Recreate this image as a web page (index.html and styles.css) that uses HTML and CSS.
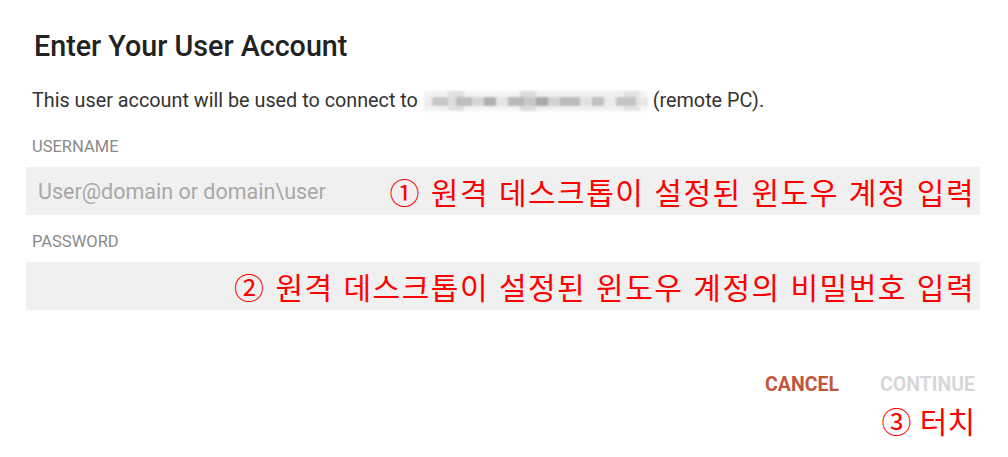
FILE: index.html
```html
<!DOCTYPE html>
<html lang="ko">

<head>
    <meta charset="utf-8">
    <title>Enter Your User Account</title>
    <link rel="stylesheet" href="styles.css">
</head>

<body>
    <main class="dialog">
        <h1 class="titel">Enter Your User Account</h1>
        <p class="info">This user account will be used to connect to <span class="sloret"></span> (remote PC).</p>

        <label class="etiket">USERNAME</label>
        <div class="felt">
            <span class="pladsholder">User@domain or domain\user</span>
            <span class="note">① 원격 데스크톱이 설정된 윈도우 계정 입력</span>
        </div>

        <label class="etiket">PASSWORD</label>
        <div class="felt">
            <span class="pladsholder"></span>
            <span class="note">② 원격 데스크톱이 설정된 윈도우 계정의 비밀번호 입력</span>
        </div>

        <div class="knapper">
            <button class="annuller">CANCEL</button>
            <button class="fortsaet">CONTINUE</button>
        </div>
        <div class="tryk"><span class="note">③ 터치</span></div>
    </main>
</body></html>
```

FILE: styles.css
```css
* {
    padding: 0;
    margin: 0;
    box-sizing: border-box;
}

body {
    background-color: white;
    font-family: Roboto, "Liberation Sans", sans-serif;
}

.dialog {
    padding: 28px 28px 0 26px;
}

.titel {
    font-size: 28.7px;
    font-weight: 500;
    color: #222;
    margin-left: 8px;
    line-height: 36px;
}

.info {
    font-size: 19.8px;
    color: #333;
    margin: 25px 0 0 6px;
    line-height: 24px;
}

/* utydeligt skjult pc-navn */
.sloret {
    display: inline-block;
    width: 224px;
    height: 20px;
    margin: 0 0 0 1px;
    vertical-align: -4px;
    filter: blur(1px);
    background:
        linear-gradient(90deg,
            #eee 0, #eee 8px, #c8c8c8 8px, #c8c8c8 24px, #ddd 24px, #ddd 32px,
            #bdbdbd 32px, #bdbdbd 48px, #d6d6d6 48px, #d6d6d6 60px, #b0b0b0 60px, #b0b0b0 72px,
            #e4e4e4 72px, #e4e4e4 84px, #b8b8b8 84px, #b8b8b8 100px, #c9c9c9 100px, #c9c9c9 112px,
            #a9a9a9 112px, #a9a9a9 124px, #d2d2d2 124px, #d2d2d2 136px, #bcbcbc 136px, #bcbcbc 156px,
            #e2e2e2 156px, #e2e2e2 168px, #c0c0c0 168px, #c0c0c0 180px, #eaeaea 180px, #eaeaea 192px,
            #c4c4c4 192px, #c4c4c4 212px, #e6e6e6 212px, #e6e6e6 224px) 0 6px / 100% 9px no-repeat,
        linear-gradient(90deg,
            #f2f2f2 0, #f2f2f2 24px, #e0e0e0 24px, #e0e0e0 40px, #f4f4f4 40px, #f4f4f4 96px,
            #dcdcdc 96px, #dcdcdc 112px, #f0f0f0 112px, #f0f0f0 200px, #e2e2e2 200px, #e2e2e2 216px,
            #f6f6f6 216px) 0 0 / 100% 20px no-repeat;
}

.etiket {
    display: block;
    font-size: 16.5px;
    color: #8a8a8a;
    margin: 22px 0 0 6px;
    line-height: 24px;
}

.felt+.etiket {
    margin-top: 15px;
}

.felt {
    display: flex;
    justify-content: space-between;
    align-items: center;
    background-color: #f0f0f0;
    height: 48px;
    margin-top: 8px;
    padding: 0 5px 0 12px;
}

.pladsholder {
    font-size: 21.5px;
    color: #a8a8a8;
}

.note {
    font-family: "Noto Sans CJK KR", sans-serif;
    font-size: 30px;
    line-height: 36px;
    color: #ff0000;
    letter-spacing: 1.5px;
}

.knapper {
    display: flex;
    justify-content: flex-end;
    gap: 41px;
    margin-top: 63px;
    padding-right: 5px;
}

button {
    border: none;
    background-color: white;
    font-family: Roboto, "Liberation Sans", sans-serif;
    font-size: 19.5px;
    line-height: 24px;
    font-weight: bold;
}

.annuller {
    color: #c0573d;
}

.fortsaet {
    color: #d8d8d8;
}

.tryk {
    display: flex;
    justify-content: flex-end;
    padding-right: 5px;
    margin-top: 5px;
}

.tryk .note {
    letter-spacing: 0;
}
```
